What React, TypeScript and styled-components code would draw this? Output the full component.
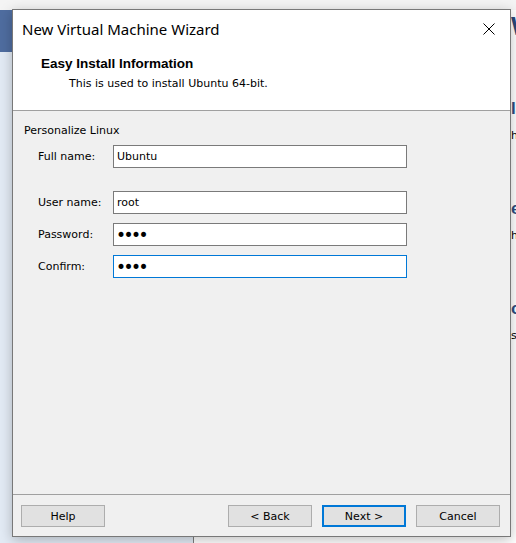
import React, { useEffect, useRef } from "react";
import styled, { createGlobalStyle } from "styled-components";

const GlobalStyle = createGlobalStyle`
  html, body {
    margin: 0;
    padding: 0;
  }
  body {
    width: 516px;
    height: 543px;
    overflow: hidden;
    background: #f4f4f4;
    font-family: "DejaVu Sans", Verdana, sans-serif;
    font-size: 11px;
    color: #000;
  }
`;

const Desktop = styled.div`
  position: relative;
  width: 516px;
  height: 543px;
  overflow: hidden;
`;

/* the main VMware window sitting behind the wizard */
const BackWindow = styled.div`
  display: flex;
  flex-direction: column;
  height: 100%;
`;

const BackTop = styled.div`
  height: 10px;
  background: #f4f4f4;
`;

const BackMain = styled.div`
  flex: 1;
  display: flex;
`;

const Sidebar = styled.div`
  width: 193px;
  flex-shrink: 0;
  display: flex;
  flex-direction: column;
  background: #e3ebf5;
  border-right: 1px solid #7d7d7d;
`;

const SidebarHead = styled.div`
  height: 42px;
  background: #4f6da0;
`;

const Pane = styled.div`
  flex: 1;
  min-width: 0;
  background: #fff;
  padding: 1px 0 0 317px;
  display: flex;
  flex-direction: column;
  white-space: nowrap;
  overflow: hidden;
`;

const PaneHeading = styled.div`
  font-family: "Liberation Sans", Arial, sans-serif;
  font-size: 26px;
  line-height: 30px;
  font-weight: bold;
  color: #2a4879;
`;

const PaneSection = styled.div<{ $first?: boolean }>`
  margin-top: ${({ $first }) => ($first ? "58px" : "55px")};
  display: flex;
  flex-direction: column;
  gap: 9px;
`;

const PaneTitle = styled.div`
  font-family: "Liberation Sans", Arial, sans-serif;
  font-size: 17px;
  line-height: 20px;
  font-weight: bold;
  color: #2c4d80;
`;

const PaneText = styled.div`
  font-size: 11px;
  line-height: 16px;
`;

/* wizard dialog */
const Dialog = styled.div`
  position: absolute;
  left: 12px;
  top: 9px;
  width: 499px;
  height: 528px;
  box-sizing: border-box;
  border: 1px solid #787878;
  background: #f0f0f0;
  display: flex;
  flex-direction: column;
  box-shadow: 0 3px 12px rgba(0, 0, 0, 0.25);
`;

const TitleBar = styled.div`
  height: 38px;
  display: flex;
  align-items: center;
  justify-content: space-between;
  padding-left: 9px;
  background: #fff;
`;

const TitleText = styled.span`
  font-family: "Noto Sans", "Open Sans", sans-serif;
  font-size: 15px;
  color: #000;
`;

const CloseButton = styled.div`
  width: 42px;
  height: 38px;
  display: flex;
  align-items: center;
  justify-content: center;
`;

const Header = styled.div`
  height: 63px;
  box-sizing: border-box;
  background: #fff;
  padding: 8px 0 0 28px;
  border-bottom: 1px solid #a0a0a0;
`;

const HeaderTitle = styled.div`
  font-family: "Liberation Sans", Arial, sans-serif;
  font-size: 13.5px;
  line-height: 15px;
  font-weight: bold;
`;

const HeaderSubtitle = styled.div`
  line-height: 15px;
  margin: 5px 0 0 28px;
`;

const Body = styled.div`
  flex: 1;
  padding: 12px 0 0 11px;
`;

const GroupLabel = styled.div`
  line-height: 15px;
`;

const FieldRow = styled.div<{ $space: number }>`
  display: flex;
  align-items: center;
  margin: ${({ $space }) => $space}px 0 0 14px;
`;

const Label = styled.label`
  width: 75px;
`;

const TextField = styled.input<{ $focused?: boolean }>`
  width: 294px;
  height: 23px;
  box-sizing: border-box;
  margin: 0;
  padding: 0 3px;
  border: 1px solid ${({ $focused }) => ($focused ? "#0078d7" : "#7a7a7a")};
  background: #fff;
  font-family: "DejaVu Sans", Verdana, sans-serif;
  font-size: 11px;
  color: #000;
  outline: none;
  caret-color: #000;

  &[type="password"] {
    font-size: 17px;
    letter-spacing: -2.5px;
    padding-left: 2px;
  }
`;

const Footer = styled.div`
  height: 42px;
  box-sizing: border-box;
  border-top: 1px solid #a0a0a0;
  padding: 10px 10px 0 8px;
  display: flex;
  gap: 10px;
`;

const Spacer = styled.div`
  flex: 1;
`;

const Button = styled.button<{ $primary?: boolean }>`
  width: 84px;
  height: 22px;
  box-sizing: border-box;
  margin: 0;
  padding: 0;
  border: ${({ $primary }) => ($primary ? "2px solid #0078d7" : "1px solid #adadad")};
  background: #e1e1e1;
  font-family: "DejaVu Sans", Verdana, sans-serif;
  font-size: 11px;
  color: #000;
`;

const CloseIcon = () => (
  <svg width="12" height="12" viewBox="0 0 12 12">
    <path d="M0.5 0.5 L11.5 11.5 M11.5 0.5 L0.5 11.5" stroke="#000" strokeWidth="1" />
  </svg>
);

const App: React.FC = () => {
  const confirmRef = useRef<HTMLInputElement>(null);

  useEffect(() => {
    const el = confirmRef.current;
    if (el) {
      el.focus();
      el.setSelectionRange(el.value.length, el.value.length);
    }
  }, []);

  return (
    <Desktop>
      <GlobalStyle />
      <BackWindow>
        <BackTop />
        <BackMain>
          <Sidebar>
            <SidebarHead />
          </Sidebar>
          <Pane>
            <PaneHeading>WORKSTATION</PaneHeading>
            <PaneSection $first>
              <PaneTitle>la Virtual Machine</PaneTitle>
              <PaneText>his virtual machine</PaneText>
            </PaneSection>
            <PaneSection>
              <PaneTitle>e a Virtual Machine</PaneTitle>
              <PaneText>hare a virtual machine</PaneText>
            </PaneSection>
            <PaneSection>
              <PaneTitle>onnect to a Server</PaneTitle>
              <PaneText>server connection</PaneText>
            </PaneSection>
          </Pane>
        </BackMain>
      </BackWindow>

      <Dialog>
        <TitleBar>
          <TitleText>New Virtual Machine Wizard</TitleText>
          <CloseButton>
            <CloseIcon />
          </CloseButton>
        </TitleBar>
        <Header>
          <HeaderTitle>Easy Install Information</HeaderTitle>
          <HeaderSubtitle>This is used to install Ubuntu 64-bit.</HeaderSubtitle>
        </Header>
        <Body>
          <GroupLabel>Personalize Linux</GroupLabel>
          <FieldRow $space={7}>
            <Label htmlFor="fullname">Full name:</Label>
            <TextField id="fullname" type="text" defaultValue="Ubuntu" />
          </FieldRow>
          <FieldRow $space={23}>
            <Label htmlFor="username">User name:</Label>
            <TextField id="username" type="text" defaultValue="root" />
          </FieldRow>
          <FieldRow $space={9}>
            <Label htmlFor="password">Password:</Label>
            <TextField id="password" type="password" defaultValue="root" />
          </FieldRow>
          <FieldRow $space={9}>
            <Label htmlFor="confirm">Confirm:</Label>
            <TextField id="confirm" type="password" defaultValue="root" ref={confirmRef} $focused />
          </FieldRow>
        </Body>
        <Footer>
          <Button>Help</Button>
          <Spacer />
          <Button>&lt; Back</Button>
          <Button $primary>Next &gt;</Button>
          <Button>Cancel</Button>
        </Footer>
      </Dialog>
    </Desktop>
  );
};

export default App;
